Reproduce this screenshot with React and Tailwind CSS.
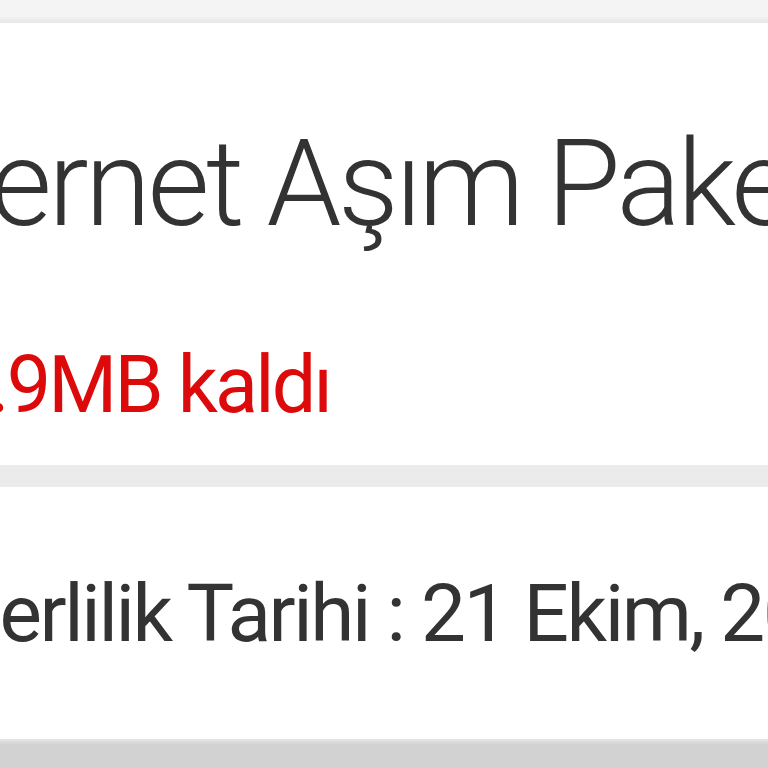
import React from 'react';

const App = () => {
  return (
    <div
      className="w-[768px] h-[768px] overflow-hidden bg-[#d2d2d2] flex flex-col"
      style={{ fontFamily: 'Roboto, "Open Sans", sans-serif' }}
    >
      {/* Top strip */}
      <div className="h-[17px] bg-[#f4f4f4]" />
      <div className="h-[6px] bg-gradient-to-b from-[#f1f1f1] to-[#e8e8e8]" />

      {/* Package card */}
      <div className="bg-white pt-[101px] pb-[40px] whitespace-nowrap">
        <h1 className="ml-[-136px] text-[120px] leading-none font-light tracking-[-0.03em] text-[#333333]">
          İnternet Aşım Paketi
        </h1>
        <p className="mt-[102px] ml-[-53px] text-[79px] leading-none tracking-[-0.035em] text-[#dc0a0a]">
          1.9MB kaldı
        </p>
      </div>

      {/* Gap */}
      <div className="h-[22px] bg-[#ebebeb]" />

      {/* Validity card */}
      <div className="bg-white pt-[87px] pb-[85px] whitespace-nowrap">
        <p className="ml-[-132px] text-[80px] leading-none tracking-[-0.03em] text-[#333333]">
          Geçerlilik Tarihi : 21 Ekim, 2023
        </p>
      </div>

      <div className="h-[6px] bg-gradient-to-b from-[#e6e6e6] to-[#d2d2d2]" />
    </div>
  );
};

export default App;
